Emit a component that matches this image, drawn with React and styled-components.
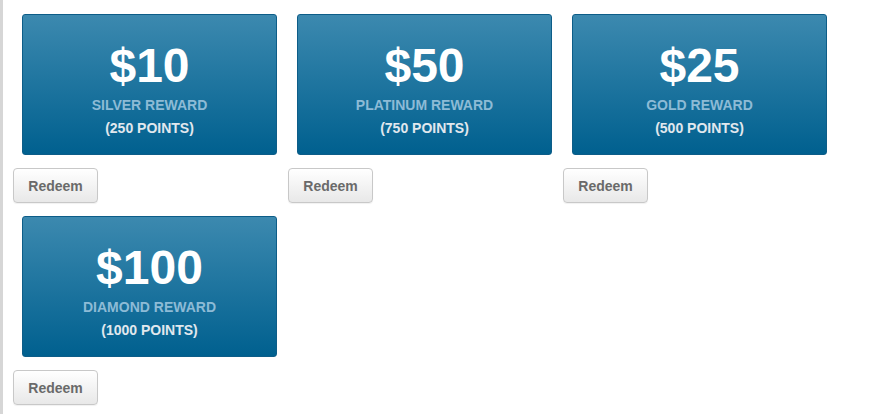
import React from "react";
import styled, { createGlobalStyle } from "styled-components";

const GlobalStyle = createGlobalStyle`
  html, body {
    margin: 0;
    padding: 0;
    background: #fff;
    font-family: "Liberation Sans", Arial, sans-serif;
  }
`;

const Page = styled.div`
  min-height: 100vh;
  box-sizing: border-box;
  border-left: 3px solid #d6d6d6;
  padding: 1px 0 0 10px;
`;

const RewardList = styled.div`
  display: flex;
  flex-wrap: wrap;
`;

const RewardItem = styled.div`
  width: 275px;
  display: flex;
  flex-direction: column;
  align-items: flex-start;
`;

const Card = styled.div`
  box-sizing: border-box;
  width: 255px;
  height: 141px;
  margin: 13px 0 0 9px;
  padding-top: 27px;
  border: 1px solid #0d5d88;
  border-radius: 3px;
  background: linear-gradient(to bottom, #3c89af 0%, #00608f 100%);
  text-align: center;
  font-weight: bold;
`;

const Amount = styled.div`
  font-size: 48px;
  line-height: 48px;
  color: #fff;
`;

const Level = styled.div`
  margin-top: 6px;
  font-size: 14px;
  line-height: 18px;
  color: #8dbbd6;
`;

const Points = styled.div`
  margin-top: 5px;
  font-size: 14px;
  line-height: 18px;
  color: #e1e8ee;
`;

const RedeemButton = styled.button`
  box-sizing: border-box;
  width: 85px;
  height: 35px;
  margin-top: 13px;
  padding: 0;
  border: 1px solid #c8c8c8;
  border-radius: 4px;
  background: linear-gradient(to bottom, #ffffff 0%, #e8e8e8 100%);
  box-shadow: 0 1px 1px rgba(0, 0, 0, 0.06);
  font-family: "Liberation Sans", Arial, sans-serif;
  font-size: 14px;
  font-weight: bold;
  color: #6a6a6a;
  cursor: pointer;
`;

const rewards = [
  { amount: "$10", level: "SILVER REWARD", points: 250 },
  { amount: "$50", level: "PLATINUM REWARD", points: 750 },
  { amount: "$25", level: "GOLD REWARD", points: 500 },
  { amount: "$100", level: "DIAMOND REWARD", points: 1000 },
];

export default function App() {
  return (
    <>
      <GlobalStyle />
      <Page>
        <RewardList>
          {rewards.map((r) => (
            <RewardItem key={r.level}>
              <Card>
                <Amount>{r.amount}</Amount>
                <Level>{r.level}</Level>
                <Points>({r.points} POINTS)</Points>
              </Card>
              <RedeemButton>Redeem</RedeemButton>
            </RewardItem>
          ))}
        </RewardList>
      </Page>
    </>
  );
}
